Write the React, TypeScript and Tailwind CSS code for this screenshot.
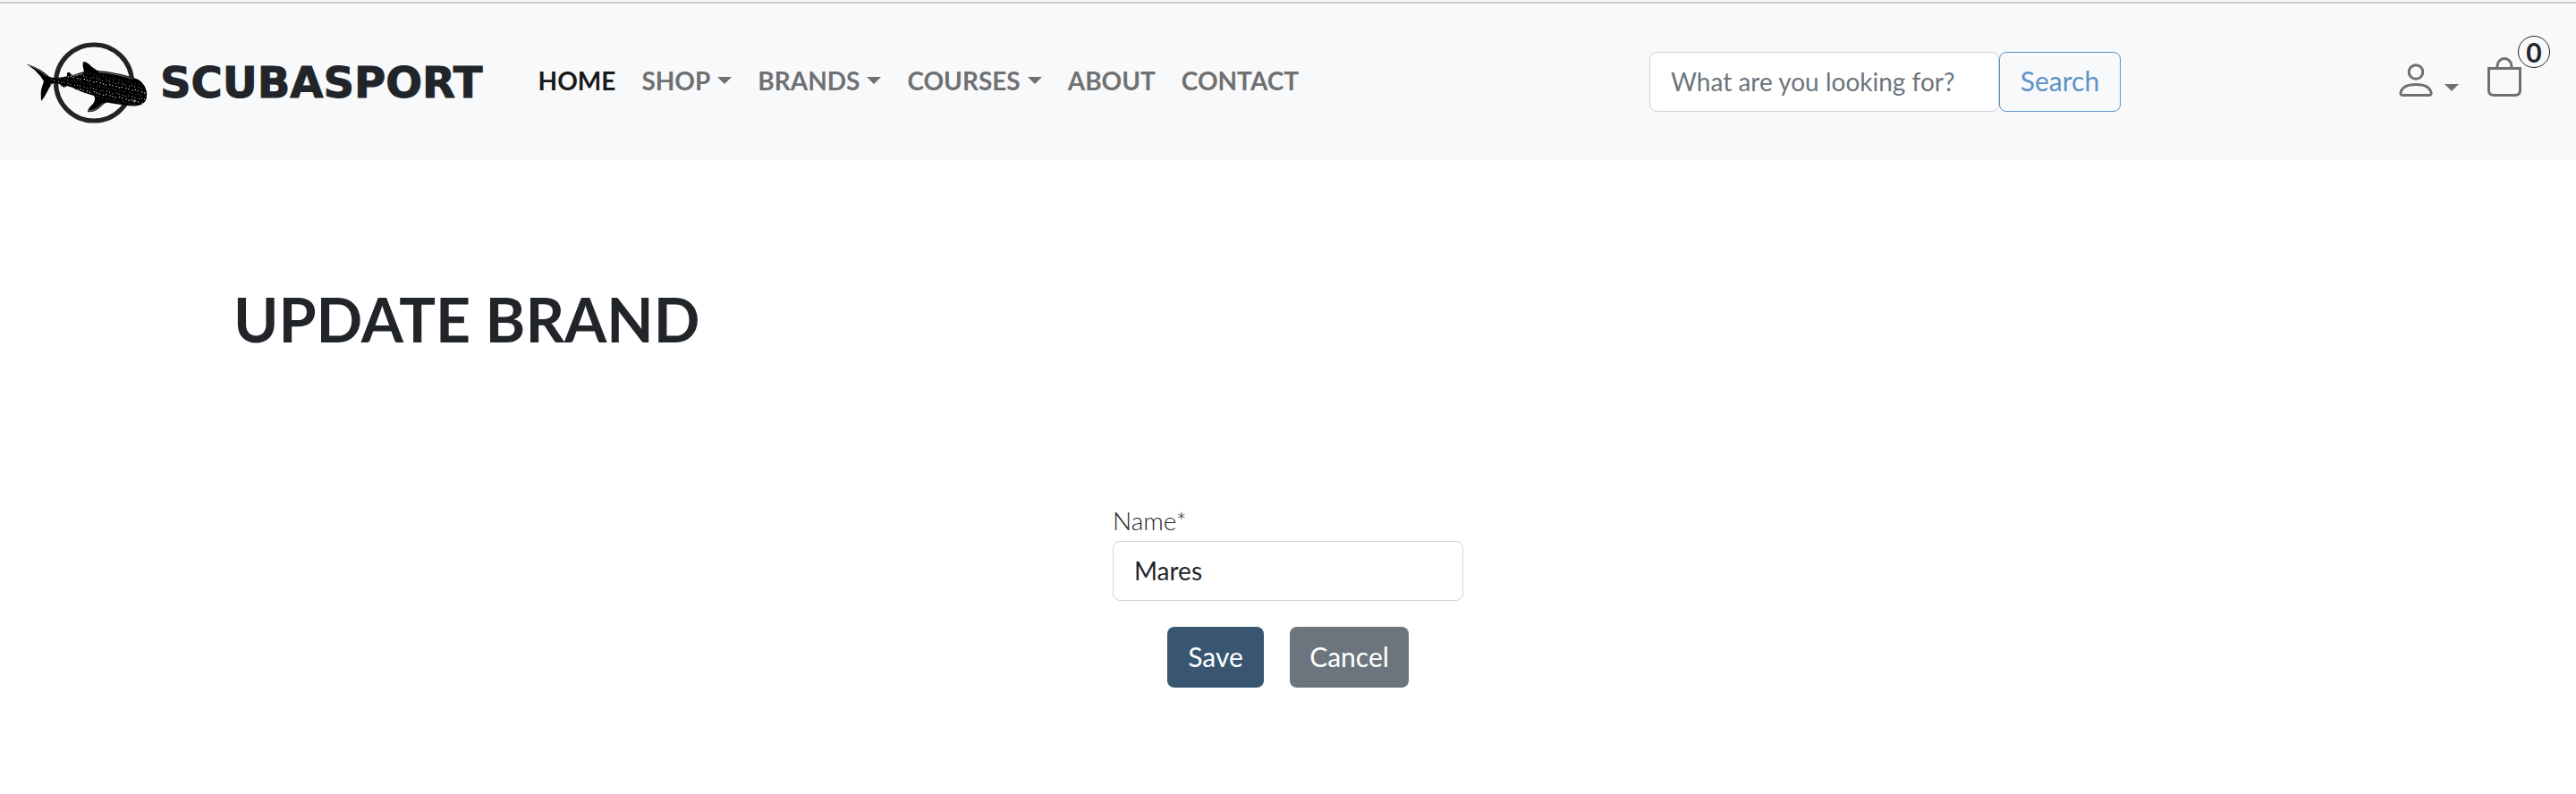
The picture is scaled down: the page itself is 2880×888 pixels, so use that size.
import React from "react";

const BODY =
  "M11 37 C18 38 27 43 34 49 C37 52 40 52 44 52 L53 51 L56 50 L56 46 L59 46 L62 49 L75 45 C74 41 73 38 74 34 C78 34 81 37 84 40 L90 44 C104 45 119 48 130 52 C139 54 144 61 145 68 C146 76 143 82 135 83 C125 85 113 81 103 80 C99 79 97 81 94 84 C90 88 84 91 79 90 C79 87 82 84 85 81 C87 78 88 75 86 72 C79 70 69 67 62 63 L56 61 L53 63 L49 61 L48 59 L41 58 C37 60 36 64 33 69 C31 73 29 76 27 78 C27 72 26 67 28 62 L30 56 C28 52 23 46 18 42 Z";

const SPOTS = Array.from({ length: 210 }, (_, i) => {
  const col = i % 30;
  const row = Math.floor(i / 30);
  const x = 38 + col * 3.6 + ((row * 7 + col * 3) % 5) * 0.35;
  const y = 38 + row * 4 + col * 0.75 + ((col * 5 + row * 3) % 4) * 0.4;
  return { x, y, r: 0.4 + ((col * 3 + row) % 3) * 0.14 };
});

function Logo() {
  return (
    <svg viewBox="10 11 138 92" className="h-[92px] w-[138px] shrink-0" aria-hidden="true">
      <clipPath id="body">
        <path d={BODY} />
      </clipPath>
      <circle cx="86" cy="57.5" r="42.5" fill="none" stroke="#222322" strokeWidth="5.2" />
      <path d={BODY} fill="#000" />
      <g clipPath="url(#body)" fill="#d4d4d4">
        {SPOTS.map((s, i) => (
          <circle key={i} cx={s.x} cy={s.y} r={s.r} />
        ))}
      </g>
      <path
        d="M91 45.6 C104 46.5 118 49.5 129 53 M13 38 C20 40 27 45 33 50 M60 48 L62 50 L74 47 M80 89 C85 89 91 86 96 80"
        fill="none"
        stroke="#c9c9c9"
        strokeWidth="0.6"
      />
      <circle cx="131" cy="78" r="1.4" fill="#888" />
    </svg>
  );
}

function Caret() {
  return (
    <svg viewBox="0 0 16 8" className="h-2 w-4" fill="currentColor" aria-hidden="true">
      <path d="M0 0H16L8 8Z" />
    </svg>
  );
}

const LINKS = [
  { label: "HOME", active: true },
  { label: "SHOP", menu: true },
  { label: "BRANDS", menu: true },
  { label: "COURSES", menu: true },
  { label: "ABOUT" },
  { label: "CONTACT" },
];

export default function App() {
  return (
    <div className="min-h-screen bg-white font-['Lato',sans-serif] text-[28px] leading-[42px] text-[#212529]">
      <header className="bg-[#f8f9fb] pt-0.5">
        <div className="flex h-[177px] items-center border-t-2 border-[#c9cbcf] px-[29px]">
          <a href="#" className="flex items-center gap-3">
            <Logo />
            <span className="font-['DejaVu_Sans',sans-serif] text-[48px] leading-none font-bold [-webkit-text-stroke:1px_#212529]">
              SCUBASPORT
            </span>
          </a>
          <nav className="ml-[62px] flex items-center gap-[29px] pb-1 font-bold">
            {LINKS.map((l) => (
              <a
                key={l.label}
                href="#"
                className={l.active ? "text-[#191919]" : "flex items-center gap-2 text-[#6f7071]"}
              >
                {l.label}
                {l.menu && <Caret />}
              </a>
            ))}
          </nav>
          <form className="mr-[310px] ml-auto flex" onSubmit={(e) => e.preventDefault()}>
            <input
              type="search"
              aria-label="Search"
              placeholder="What are you looking for?"
              className="h-[67px] w-[391px] rounded-lg border border-[#ced4da] bg-white px-[23px] pb-0.5 placeholder:text-[#6c757d]"
            />
            <button className="h-[67px] w-[136px] rounded-lg border border-[#5e93c6] pb-1 text-[30px] text-[#5e93c6]">
              Search
            </button>
          </form>
          <div className="flex items-center pb-1 text-[#6f7071]">
            <button aria-label="Account" className="flex items-center gap-3">
              <svg viewBox="0 0 40 40" className="size-10" fill="none" stroke="currentColor" strokeWidth="3" aria-hidden="true">
                <circle cx="20" cy="10.5" r="7.8" />
                <path d="M5 36.500H35Q37.500 36.500 37 33.500C35.500 27 28 24.500 20 24.500S4.500 27 3 33.500Q2.500 36.500 5 36.500Z" />
              </svg>
              <span className="pt-4">
                <Caret />
              </span>
            </button>
            <a href="#" aria-label="Basket" className="relative mr-8 ml-8 pb-2">
              <svg viewBox="0 0 38 44" className="h-11 w-[38px]" fill="none" stroke="currentColor" strokeWidth="3" aria-hidden="true">
                <path d="M1.500 12.500H36.500V37Q36.500 42.500 31 42.500H7Q1.500 42.500 1.500 37Z" />
                <path d="M11 12V10A8 8.500 0 0 1 27 10V12" />
              </svg>
              <span className="absolute -top-6 left-[34px] flex size-9 items-center justify-center rounded-full border border-[#212529] text-[30px] font-bold text-[#212529]">
                0
              </span>
            </a>
          </div>
        </div>
      </header>
      <main>
        <h1 className="px-[261px] pt-[134px] text-[68px] leading-[88px] font-bold">UPDATE BRAND</h1>
        <form className="mx-auto flex w-[392px] flex-col pt-[160px]" onSubmit={(e) => e.preventDefault()}>
          <label htmlFor="name" className="pb-0.5 font-light">
            Name*
          </label>
          <input
            id="name"
            defaultValue="Mares"
            className="h-[67px] rounded-lg border border-[#ced4da] px-[23px] pb-0.5"
          />
          <div className="flex justify-center gap-[29px] pt-[29px] text-[30px] text-white">
            <button className="h-[68px] w-[108px] rounded-lg bg-[#38566f] pb-0.5">Save</button>
            <button type="button" className="h-[68px] w-[133px] rounded-lg bg-[#6c757d] pb-0.5">
              Cancel
            </button>
          </div>
        </form>
      </main>
    </div>
  );
}
